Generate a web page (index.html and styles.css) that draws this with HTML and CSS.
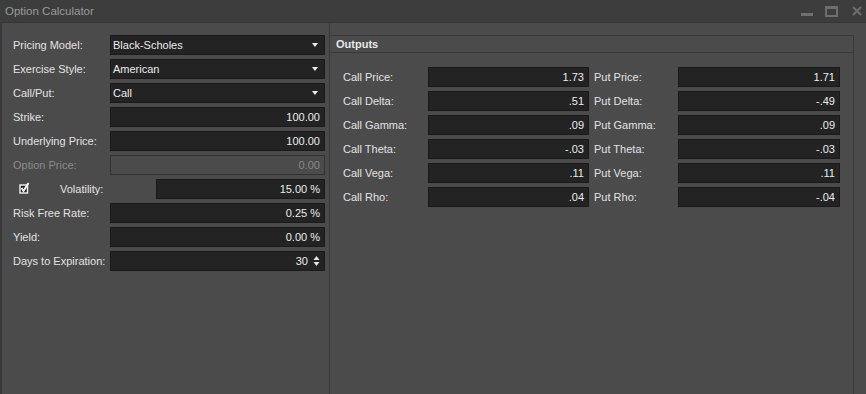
FILE: index.html
```html
<!DOCTYPE html>
<html lang="en">
<head>
    <meta charset="UTF-8">
    <title>Option Calculator</title>
    <link rel="stylesheet" href="styles.css">
</head>
<body>
    <div class="window">
        <div class="titlebar">
            <span class="title">Option Calculator</span>
            <div class="controls">
                <span class="ctl-min"></span>
                <span class="ctl-max"></span>
                <svg class="ctl-close" width="10" height="10" viewBox="0 0 10 10">
                    <path d="M1 1 L9 9 M9 1 L1 9" stroke="#6e6e6e" stroke-width="2"/>
                </svg>
            </div>
        </div>

        <div class="body">
            <div class="inputs">
                <div class="row">
                    <label>Pricing Model:</label>
                    <div class="field select">Black-Scholes<span class="arrow"></span></div>
                </div>
                <div class="row">
                    <label>Exercise Style:</label>
                    <div class="field select">American<span class="arrow"></span></div>
                </div>
                <div class="row">
                    <label>Call/Put:</label>
                    <div class="field select">Call<span class="arrow"></span></div>
                </div>
                <div class="row">
                    <label>Strike:</label>
                    <div class="field num">100.00</div>
                </div>
                <div class="row">
                    <label>Underlying Price:</label>
                    <div class="field num">100.00</div>
                </div>
                <div class="row disabled">
                    <label>Option Price:</label>
                    <div class="field num">0.00</div>
                </div>
                <div class="row vol">
                    <span class="check">
                        <svg width="11" height="12" viewBox="0 0 11 12">
                            <rect x="1" y="3" width="7.5" height="8" fill="#262626" stroke="#f2f2f2" stroke-width="1.4"/>
                            <path d="M2.5 6 L4.5 9 L9.5 1" fill="none" stroke="#f2f2f2" stroke-width="2"/>
                        </svg>
                    </span>
                    <label>Volatility:</label>
                    <div class="field num">15.00 %</div>
                </div>
                <div class="row">
                    <label>Risk Free Rate:</label>
                    <div class="field num">0.25 %</div>
                </div>
                <div class="row">
                    <label>Yield:</label>
                    <div class="field num">0.00 %</div>
                </div>
                <div class="row">
                    <label>Days to Expiration:</label>
                    <div class="field num spin">30
                        <svg class="spinner" width="7" height="12" viewBox="0 0 7 12">
                            <path d="M3.5 1 L6.5 5 L0.5 5 Z M3.5 11 L6.5 7 L0.5 7 Z" fill="#e6e6e6"/>
                        </svg>
                    </div>
                </div>
            </div>

            <div class="outputs">
                <div class="group">
                    <div class="group-head">Outputs</div>
                    <div class="grid">
                        <label>Call Price:</label><div class="field num">1.73</div>
                        <label class="put">Put Price:</label><div class="field num">1.71</div>
                        <label>Call Delta:</label><div class="field num">.51</div>
                        <label class="put">Put Delta:</label><div class="field num">-.49</div>
                        <label>Call Gamma:</label><div class="field num">.09</div>
                        <label class="put">Put Gamma:</label><div class="field num">.09</div>
                        <label>Call Theta:</label><div class="field num">-.03</div>
                        <label class="put">Put Theta:</label><div class="field num">-.03</div>
                        <label>Call Vega:</label><div class="field num">.11</div>
                        <label class="put">Put Vega:</label><div class="field num">.11</div>
                        <label>Call Rho:</label><div class="field num">.04</div>
                        <label class="put">Put Rho:</label><div class="field num">-.04</div>
                    </div>
                </div>
            </div>
        </div>
    </div>
</body>
</html>
```

FILE: styles.css
```css
html, body {
    margin: 0;
    height: 100%;
}
body {
    font-family: "Liberation Sans", Arial, sans-serif;
    font-size: 11px;
    color: #e2e2e2;
    background-color: #4b4b4b;
    overflow: hidden;
}
.window {
    height: 100%;
    display: flex;
    flex-direction: column;
}
.titlebar {
    height: 22px;
    background-color: #3d3d3d;
    border-bottom: 1px solid #353535;
    display: flex;
    align-items: center;
    justify-content: space-between;
    padding: 0 4px 0 5px;
    flex-shrink: 0;
}
.title {
    color: #9a9a9a;
    font-size: 11.5px;
}
.controls {
    display: flex;
    align-items: center;
    gap: 12px;
}
.ctl-min {
    width: 12px;
    height: 3px;
    margin-top: 6px;
    background-color: #6e6e6e;
}
.ctl-max {
    width: 9px;
    height: 6px;
    border: 2px solid #6e6e6e;
    border-top-width: 3px;
}
.ctl-close {
    margin-left: 2px;
}
.body {
    flex: 1;
    display: flex;
    border-left: 2px solid #3a3a3a;
}
.inputs {
    width: 316px;
    padding: 12px 4px 0 11px;
    border-right: 1px solid #3a3a3a;
    display: flex;
    flex-direction: column;
    gap: 4px;
}
.row {
    display: flex;
    align-items: center;
    height: 20px;
}
.row label {
    width: 97px;
    flex-shrink: 0;
}
.field {
    box-sizing: border-box;
    height: 20px;
    line-height: 18px;
    background-color: #232323;
    border: 1px solid #1a1a1a;
    padding: 0 4px;
    flex: 1;
    color: #ececec;
}
.select {
    position: relative;
    padding-left: 2px;
}
.arrow {
    position: absolute;
    right: 6px;
    top: 7px;
    border-left: 3px solid transparent;
    border-right: 3px solid transparent;
    border-top: 4px solid #ececec;
}
.num {
    text-align: right;
}
.disabled label {
    color: #8a8a8a;
}
.disabled .field {
    background-color: #4b4b4b;
    border-color: #333;
    color: #888;
}
.vol .check {
    width: 11px;
    height: 12px;
    margin-left: 6px;
    margin-bottom: 2px;
    flex-shrink: 0;
}
.vol label {
    width: 96px;
    margin-left: 30px;
}
.spin {
    display: flex;
    justify-content: flex-end;
    align-items: center;
    gap: 5px;
    padding-right: 4px;
}
.outputs {
    flex: 1;
    padding: 12px 12px 0 0;
}
.group {
    height: 100%;
    border: 1px solid #3a3a3a;
    border-left: none;
    border-bottom: none;
    width: 523px;
}
.group-head {
    height: 16px;
    line-height: 16px;
    padding-left: 6px;
    font-weight: bold;
    border-bottom: 1px solid #3a3a3a;
    color: #e8e8e8;
}
.grid {
    display: grid;
    grid-template-columns: 86px 161px 89px 162px;
    grid-auto-rows: 20px;
    row-gap: 4px;
    padding: 14px 0 0 12px;
    align-items: center;
}
.grid label {
    padding-left: 1px;
}
.grid .put {
    padding-left: 5px;
}
```
